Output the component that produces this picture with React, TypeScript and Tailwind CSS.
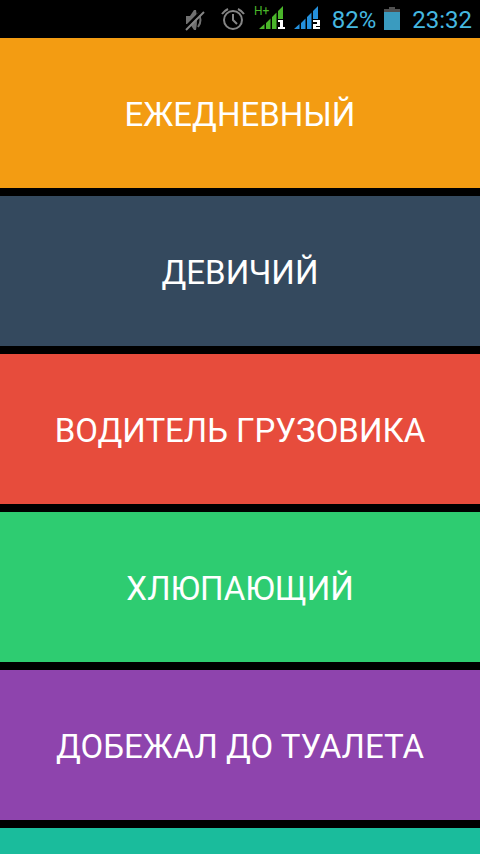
import clsx from 'clsx';

const sounds = [
  { id: 1, title: 'ЕЖЕДНЕВНЫЙ', color: 'bg-[#f39c12]' },
  { id: 2, title: 'ДЕВИЧИЙ', color: 'bg-[#34495e]' },
  { id: 3, title: 'ВОДИТЕЛЬ ГРУЗОВИКА', color: 'bg-[#e74c3c]' },
  { id: 4, title: 'ХЛЮПАЮЩИЙ', color: 'bg-[#2ecc71]' },
  { id: 5, title: 'ДОБЕЖАЛ ДО ТУАЛЕТА', color: 'bg-[#8e44ad]' },
  { id: 6, title: '', color: 'bg-[#1abc9c]' },
];

const MuteIcon = () => (
  <svg width="20" height="24" viewBox="0 0 20 24" fill="none" className="mr-4">
    <path d="M1 9h4l4-6h2q2 10 0 20H9l-4-6H1z" fill="#707070" />
    <path d="M13 6q5 7 0 14" stroke="#707070" strokeWidth="2" />
    <path d="M0 21L18 3" stroke="#000" strokeWidth="3" />
    <path d="M1 23L19 5" stroke="#858585" strokeWidth="2" />
  </svg>
);

const AlarmIcon = () => (
  <svg width="24" height="24" viewBox="0 0 24 24" fill="none" stroke="#858585" className="mr-2">
    <circle cx="12" cy="13" r="9" strokeWidth="2" />
    <path d="M12 7v6l4 4" strokeWidth="2" />
    <path d="M1 7Q3 4 7 2M17 2Q21 4 23 7" strokeWidth="2" />
  </svg>
);

const SignalIcon = ({ sim, network }: { sim: number; network?: string }) => (
  <svg
    width={network ? 32 : 27}
    height="32"
    viewBox={network ? '-2 -2 32 32' : '3 -2 27 32'}
    className={network ? 'mr-2' : 'mr-3'}
  >
    {network && (
      <text x="-1" y="10" fontSize="12" fill="#4ab52a">{network}</text>
    )}
    <path
      d="M4 24L9.5 19V24zM11 24V18L15.5 13.5V24zM17 24V12L21.5 7.5V24zM23 24V6L28 1V24z"
      fill={network ? '#4ab52a' : '#2490dc'}
    />
    <path d="M22 14h8v11h-8z" fill="#000" />
    {sim === 1 ? (
      <path d="M23 15h5v7h2v2h-7v-2h2v-5h-2z" fill="#fff" />
    ) : (
      <path d="M23 15h7v6h-4v1h4v2h-7v-5h4v-2h-4z" fill="#fff" />
    )}
  </svg>
);

const BatteryIcon = () => (
  <svg width="16" height="24" viewBox="0 0 16 24" className="mr-3 ml-2">
    <path d="M5 0h6v2h5v3H0V2h5z" fill="#505050" />
    <path d="M0 5h16v18H0z" fill="#3a9bbf" />
  </svg>
);

const StatusBar = () => (
  <header className="flex h-[38px] shrink-0 items-center justify-end bg-black pr-2 text-2xl text-[#45b8e0]">
    <MuteIcon />
    <AlarmIcon />
    <SignalIcon sim={1} network="H+" />
    <SignalIcon sim={2} />
    <span className="pt-0.5">82%</span>
    <BatteryIcon />
    <time className="pt-0.5">23:32</time>
  </header>
);

const App = () => {
  return (
    <div className="flex h-screen flex-col overflow-hidden bg-black font-['Roboto',sans-serif]">
      <StatusBar />
      <main className="flex flex-1 flex-col gap-2 overflow-y-auto [scrollbar-width:none]">
        {sounds.map((sound) => (
          <button
            key={sound.id}
            type="button"
            className={clsx('h-[150px] w-full shrink-0 pt-1 text-[33px] text-white', sound.color)}
          >
            {sound.title}
          </button>
        ))}
      </main>
    </div>
  );
};

export default App;
